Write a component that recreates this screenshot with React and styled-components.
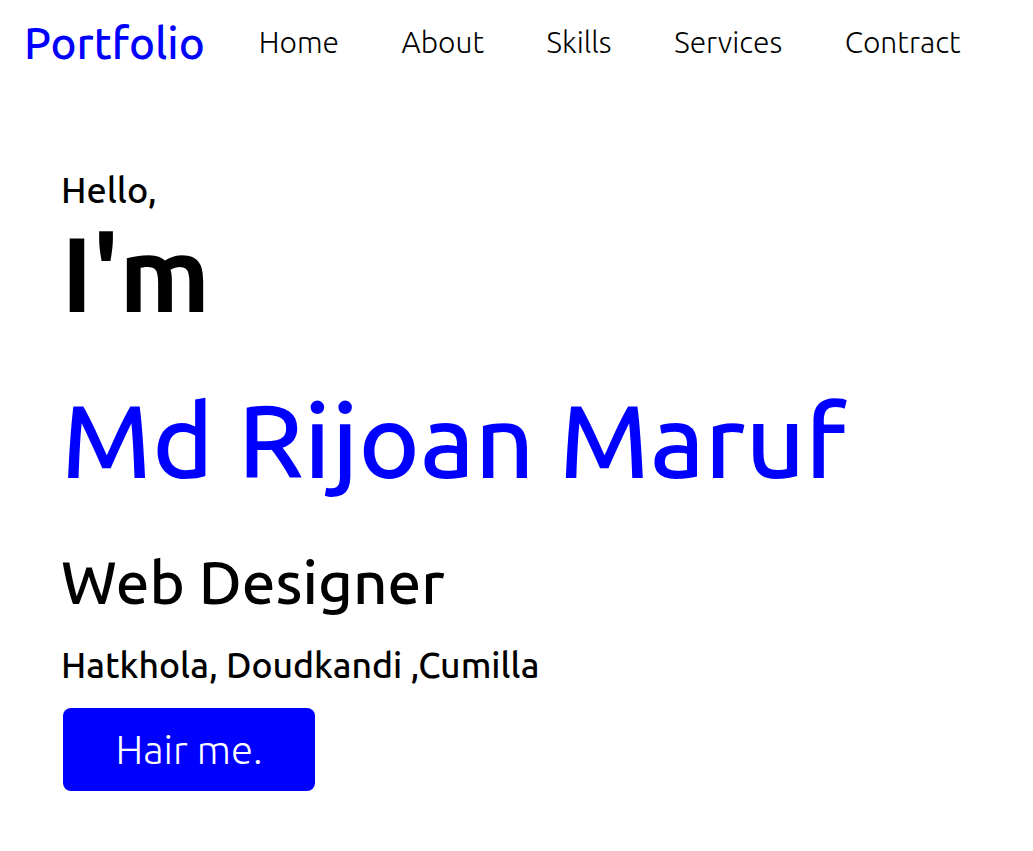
import React from 'react';
import styled, { createGlobalStyle } from 'styled-components';

const GlobalStyle = createGlobalStyle`
  * { box-sizing: border-box; }
  body {
    margin: 0;
    background: #fff;
    font-family: "Ubuntu", "Open Sans", "Noto Sans", sans-serif;
    color: #000;
  }
`;

const Header = styled.header`
  display: flex;
  align-items: center;
  height: 84px;
  padding: 0 24px;
`;

const Logo = styled.a`
  font-size: 44px;
  font-weight: 500;
  color: #0000ff;
  text-decoration: none;
  margin-right: 54px;
`;

const NavList = styled.ul`
  display: flex;
  gap: 62.5px;
  list-style-type: none;
  margin: 0;
  padding: 0;
`;

const NavItem = styled.li`
  font-size: 30px;
  font-weight: 300;

  a {
    color: #000;
    text-decoration: none;
  }
`;

const Hero = styled.section`
  display: flex;
  flex-direction: column;
  align-items: flex-start;
  padding: 86px 0 0 61px;
`;

const Greeting = styled.h3`
  margin: 0;
  font-size: 36px;
  font-weight: 500;
  line-height: 40px;
`;

const Intro = styled.h1`
  margin: 0;
  font-size: 106px;
  font-weight: 700;
  line-height: 125px;
`;

const Name = styled.h1`
  margin: 39px 0 0;
  font-size: 103.8px;
  font-weight: 500;
  line-height: 131px;
  color: #0000ff;
`;

const Role = styled.h2`
  margin: 42px 0 0;
  font-size: 60px;
  font-weight: 500;
  line-height: 70px;
`;

const Address = styled.p`
  margin: 28px 0 0;
  font-size: 35.6px;
  font-weight: 500;
  line-height: 40px;
`;

const HireButton = styled.button`
  margin: 23px 0 0 2px;
  width: 252px;
  height: 83px;
  border: none;
  border-radius: 8px;
  background: #0000ff;
  color: #fff;
  font-family: inherit;
  font-size: 40px;
  font-weight: 300;
  cursor: pointer;
`;

const links = ['Home', 'About', 'Skills', 'Services', 'Contract'];

const App = () => {
  return (
    <>
      <GlobalStyle />
      <Header>
        <Logo href="#">Portfolio</Logo>
        <NavList>
          {links.map((l) => (
            <NavItem key={l}>
              <a href="#">{l}</a>
            </NavItem>
          ))}
        </NavList>
      </Header>
      <Hero>
        <Greeting>Hello,</Greeting>
        <Intro>I'm</Intro>
        <Name>Md Rijoan Maruf</Name>
        <Role>Web Designer</Role>
        <Address>Hatkhola, Doudkandi ,Cumilla</Address>
        <HireButton>Hair me.</HireButton>
      </Hero>
    </>
  );
};

export default App;
